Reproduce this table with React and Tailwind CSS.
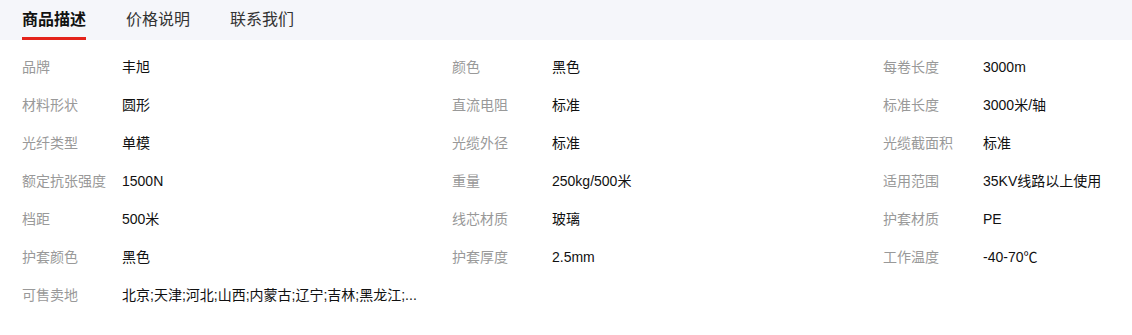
const tabs = ['商品描述', '价格说明', '联系我们'];

const rows = [
  [['品牌', '丰旭'], ['颜色', '黑色'], ['每卷长度', '3000m']],
  [['材料形状', '圆形'], ['直流电阻', '标准'], ['标准长度', '3000米/轴']],
  [['光纤类型', '单模'], ['光缆外径', '标准'], ['光缆截面积', '标准']],
  [['额定抗张强度', '1500N'], ['重量', '250kg/500米'], ['适用范围', '35KV线路以上使用']],
  [['档距', '500米'], ['线芯材质', '玻璃'], ['护套材质', 'PE']],
  [['护套颜色', '黑色'], ['护套厚度', '2.5mm'], ['工作温度', '-40-70℃']],
  [['可售卖地', '北京;天津;河北;山西;内蒙古;辽宁;吉林;黑龙江;...']],
];

export default function App() {
  return (
    <div className="w-[1132px] h-[335px] bg-white overflow-hidden font-['Liberation_Sans','Noto_Sans_CJK_SC',sans-serif]">
      <div className="h-10 bg-[#f5f6fa] flex pl-[22px] gap-10">
        {tabs.map((t, i) => (
          <div key={t} className="relative h-10 flex items-center">
            <span className={i === 0 ? 'text-base font-bold text-[#111]' : 'text-base text-[#333]'}>{t}</span>
            {i === 0 && <div className="absolute left-0 right-0 bottom-0 h-[3px] bg-[#e4231b]" />}
          </div>
        ))}
      </div>
      <div className="pt-2 pl-[22px]">
        {rows.map((row, r) => (
          <div key={r} className="grid grid-cols-[430px_431px_1fr] h-[38px] items-center text-sm">
            {row.map(([k, v]) => (
              <div key={k} className="flex">
                <span className="w-[100px] text-[#999]">{k}</span>
                <span className="text-[#111] whitespace-nowrap">{v}</span>
              </div>
            ))}
          </div>
        ))}
      </div>
    </div>
  );
}
